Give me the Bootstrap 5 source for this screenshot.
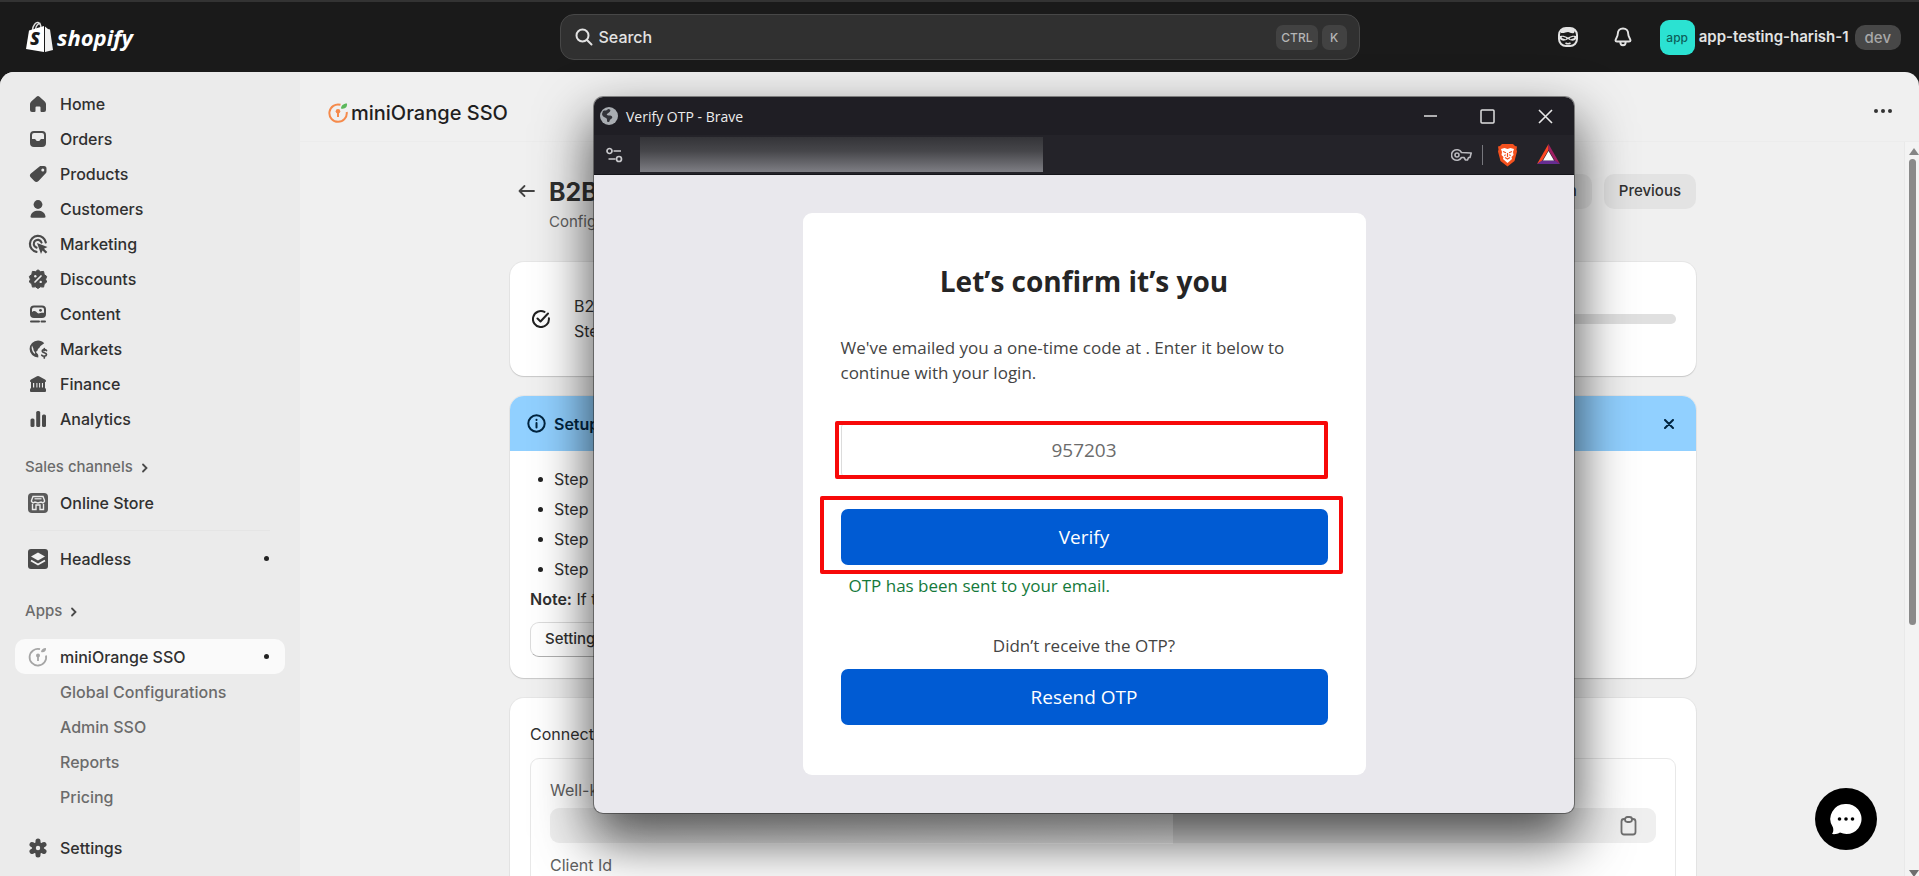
<!DOCTYPE html>
<html lang="en">
<head>
<meta charset="utf-8">
<meta name="viewport" content="width=device-width, initial-scale=1">
<title>miniOrange SSO</title>
<link href="https://cdn.jsdelivr.net/npm/bootstrap@5.3.0/dist/css/bootstrap.min.css" rel="stylesheet">
<script src="https://cdn.jsdelivr.net/npm/bootstrap@5.3.0/dist/js/bootstrap.bundle.min.js"></script>
<style>
:root{--ink:#303030;--soft:#616161;--ui:"Inter","Liberation Sans",sans-serif;--win:"Open Sans","Noto Sans",sans-serif}
body{font-family:var(--ui);font-size:16px;color:var(--ink);background:#1a1a1a}
svg{display:block;flex:none}
.shell{height:100vh;overflow:hidden}
.topbar{height:72px;border-top:2px solid #333;background:#1a1a1a;color:#e3e3e3;padding:0 18px}
.side-slot{flex:1 1 0}
.wordmark{font:italic 700 22px/30px var(--win);color:#fff;text-decoration:none}
.searchbox{width:800px;height:46px;border:1px solid #474747;border-radius:14px;background:#303030;padding:0 12px 0 14px}
.searchbox input{background:none;border:0;outline:0;color:#e3e3e3;font-weight:500;min-width:0}
.searchbox input::placeholder{color:#e3e3e3;opacity:1}
.searchbox kbd{font:500 12px/25px var(--ui);background:#424242;color:#b5b5b5;border-radius:7px;padding:0 5px;min-width:25px;text-align:center}
.iconbtn{background:none;border:0;padding:0;color:inherit}
.bell{margin:0 28px 0 36px}
.avatar{width:35px;height:35px;border-radius:9px;background:#2be2d2;color:#0b5f5a;font:500 12px/35px var(--ui);text-align:center}
.store{font-weight:600;font-size:15px;margin:0 6px 0 4px}
.devtag{background:#474747;color:#a8a8a8;border-radius:10px;font:500 15px/25px var(--ui);padding:0 10px}
.frame{border-radius:14px 14px 0 0;overflow:hidden;background:#f0f0f0;min-height:0}
.sidebar{width:300px;background:#ebebeb;padding:14px 15px}
.sidebar a{display:flex;align-items:center;gap:12px;height:35px;padding:0 16px 0 13px;border-radius:10px;color:var(--ink);text-decoration:none;font-weight:500}
.sidebar a svg{color:#4a4a4a}
.sidebar a.sub{padding-left:45px;color:#6b6b6b}
.sidebar a.sect{color:#6b6b6b;padding-left:10px;font-size:15px;gap:8px;margin-top:14px}
.sidebar a.sect-apps{margin:18px 0 10px}
.sidebar a.on{background:#fafafa}
.dotmark{width:5px;height:5px;border-radius:50%;background:#222;margin-left:auto}
.rule{height:1px;background:#e5e5e5;margin:10px 15px}
.apphead{height:70px;border-bottom:1px solid #ececec;padding:0 27px 12px 28px}
.apphead h1{font-size:20px;font-weight:500;color:#1f1f1f;margin:0}
.apptitle{gap:3px}
.canvas{padding:32px 208px 0 210px}
.pagehead{padding-left:8px;margin-bottom:28px}
.pagehead h2{font-size:25px;font-weight:700;line-height:36px;margin:0}
.pagehead .subtitle{line-height:24px;color:var(--soft);font-size:15px}
.pagetitle{padding-left:14px}
.softbtn{background:#e3e3e3;border:0;border-radius:10px;height:35px;padding:0 15px;font-weight:500;font-size:15px;color:var(--ink)}
.panel{background:#fff;border-radius:14px;box-shadow:0 1px 1px #c8c8c8,0 0 0 1px #e6e6e6}
.panel + .panel{margin-top:20px}
.status{min-height:114px;padding:0 20px 0 22px;gap:24px}
.status .lines{line-height:25px}
.status .progress{height:10px;background:#e0e0e0}
.banner{background:#91d0ff;height:55px;padding:0 22px 0 17px;border-radius:14px 14px 0 0;color:#00243f;font-weight:600}
.guide{padding:13px 20px 21px}
.steps{list-style:none;margin:0;padding:0 0 0 8px;line-height:30px}
.steps li{display:flex;align-items:center;gap:11px}
.steps li::before{content:"";width:5px;height:5px;border-radius:50%;background:#222}
.noteline{line-height:30px;margin-bottom:8px}
.outbtn{height:35px;border:1px solid #dcdcdc;border-bottom-color:#b0b0b0;border-radius:9px;background:#fff;font-weight:500;font-size:15px;padding:0 14px;color:var(--ink)}
.connect{padding:24px 20px 20px}
.inset-box{border:1px solid #e8e8e8;border-radius:9px;padding:19px;margin-top:12px;height:200px}
.inset-box label{display:block;line-height:24px;color:var(--soft)}
.fieldrow{height:35px;background:#efefef;border-radius:9px;padding:0 19px;margin:6px 0 10px}
.fieldrow input{background:none;border:0;min-width:0}
.rail{width:15px;background:#f3f3f3;border-left:1px solid #e9e9e9;padding:6px 0 0 4px}
.thumb{width:7px;height:466px;border-radius:4px;background:#8a8a8a;margin-top:3px}
.workarea{min-height:0}
.window{position:absolute;left:594px;top:97px;width:980px;border-radius:9px;background:#e9e8ed;box-shadow:0 0 0 1px rgba(40,40,40,.5),0 25px 54px 3px rgba(0,0,0,.68);font-family:var(--win)}
.titlebar{height:38px;background:#1f1e24;color:#ededed;border-radius:9px 9px 0 0;font-size:14px;padding:0 21px 0 6px}
.tb-min{margin-right:42px}
.tb-max{margin-right:43px}
.urlbar{height:40px;background:#242329;border-bottom:1px solid #15151a;padding:0 14px 0 12px}
.masked{width:403px;height:35px;background:linear-gradient(#343438,#46464a 40%,#7e7e84);margin-left:17px}
.divider{width:1px;height:20px;background:#77777d;margin:0 14px 0 10px}
.tri{margin-left:19px}
.otp{width:563px;margin:38px auto;background:#fff;border-radius:9px;padding:48px 38px 50px}
.otp h2{font-size:28px;font-weight:700;line-height:40px;margin:0 0 34px;color:#252525;text-align:center}
.otp p{font-size:17px;line-height:25px;margin:0 0 38px;color:#444}
.otp input{width:100%;height:54px;border:1px solid #dcdcdc;border-radius:4px;text-align:center;font-size:19px;color:#6b6b6b}
.bluebtn{height:56px;width:100%;border:0;border-radius:7px;background:#005bd3;color:#fff;font-size:19px}
.verify-row{margin-top:32px}
.callout{position:absolute;border:4px solid #f70909;border-radius:2px;pointer-events:none}
.c-code{inset:-2px 0 -2px -6px}
.c-verify{inset:-13px -15px -9px -21px}
.otp .sent{color:#14793a;font-weight:500;line-height:24px;margin:9px 8px 36px}
.otp .ask{line-height:24px;text-align:center;margin:0 0 11px}
.smudge{position:absolute;left:-29px;bottom:-31px;width:608px;height:30px;background:linear-gradient(90deg,rgba(255,255,255,0),rgba(255,255,255,.12))}
.chat{position:absolute;right:42px;bottom:26px;width:62px;height:62px;border-radius:50%;background:#000;border:0;padding:0}
</style>
</head>
<body>
<div class="shell d-flex flex-column position-relative">
  <header class="topbar d-flex align-items-center flex-shrink-0">
    <div class="side-slot d-flex align-items-center gap-1">
      <svg class="ms-2" width="27" height="32" viewBox="0 0 27 32"><path d="M6.500 9C7 4 10 1 12 1.500c2 .5 3 3 3 6M9.500 8c.5-3.500 3-6 5-5.500" fill="none" stroke="#ddd" stroke-width="1.400"/><path d="M3 9.500 18 5v26L0 28z" fill="#fff"/><path d="M19 5.500l3 2.500 2 .5L27 29l-8 2z" fill="#f1f1f1"/><text x="4" y="24" font-family="Open Sans" font-weight="800" font-style="italic" font-size="18" fill="#1a1a1a">S</text></svg>
      <a class="wordmark" href="#">shopify</a>
    </div>
    <div class="searchbox d-flex align-items-center gap-1">
      <svg width="18" height="18" viewBox="0 0 18 18" fill="none" stroke="#e3e3e3" stroke-width="2" stroke-linecap="round"><circle cx="7.500" cy="7.500" r="6"/><path d="M12 12l4.500 4.500"/></svg>
      <input class="flex-grow-1" type="text" placeholder="Search" aria-label="Search">
      <kbd>CTRL</kbd><kbd>K</kbd>
    </div>
    <div class="side-slot d-flex align-items-center justify-content-end">
      <button class="iconbtn" aria-label="Assistant"><svg width="20" height="20" viewBox="0 0 20 20"><rect x="1" y="1" width="18" height="18" rx="7" fill="none" stroke="#e3e3e3" stroke-width="2"/><path d="M3 3.500C6 .5 14 .5 17 3.500L16 6c-3 1-4-1-6-1S6 6.500 3 6z" fill="#e3e3e3"/><path d="M2 9c3-.5 5 0 8 1.500C13 9 15 8.500 18 9v3c-2 2.500-5 2-8 0-3 2-6 2.500-8 0z" fill="#e3e3e3"/><path d="M4.500 10.500l3 1M15.500 10.500l-3 1" stroke="#1a1a1a" stroke-width="1.600" stroke-linecap="round"/><path d="M7.500 16q2.500 1.500 5 0" stroke="#e3e3e3" stroke-width="1.500" fill="none"/></svg></button>
      <button class="iconbtn bell" aria-label="Notifications"><svg width="18" height="20" viewBox="0 0 18 20" fill="none" stroke="#e3e3e3" stroke-width="1.900" stroke-linejoin="round"><path d="M9 1.500c-3.200 0-5.200 2.300-5.200 5.200C3.800 10 1.500 11.500 1.500 13.500c0 .9.700 1 1.500 1h12c.8 0 1.500-.1 1.500-1 0-2-2.300-3.500-2.300-6.800C14.200 3.800 12.200 1.500 9 1.500zM6.300 15a2.700 3.300 0 0 0 5.400 0"/></svg></button>
      <div class="avatar">app</div><span class="store">app-testing-harish-1</span><span class="devtag">dev</span>
    </div>
  </header>

  <div class="frame d-flex flex-grow-1">
    <nav class="sidebar flex-shrink-0" aria-label="Main">
      <a href="#"><svg width="20" height="20" viewBox="0 0 20 20"><path fill="currentColor" d="M8.500 2.700a2.200 2.200 0 0 1 3 0l5 4.500c.9.800 1.500 1.900 1.500 3V16a2 2 0 0 1-2 2h-2.500a1 1 0 0 1-1-1v-3.500a1 1 0 0 0-1-1h-3a1 1 0 0 0-1 1V17a1 1 0 0 1-1 1H4a2 2 0 0 1-2-2v-5.800c0-1.100.600-2.200 1.500-3z"/></svg>Home</a>
      <a href="#"><svg width="20" height="20" viewBox="0 0 20 20"><path fill="currentColor" fill-rule="evenodd" d="M6 2h8a4 4 0 0 1 4 4v8a4 4 0 0 1-4 4H6a4 4 0 0 1-4-4V6a4 4 0 0 1 4-4zm0 2a2 2 0 0 0-2 2v4h2.500c.8 0 1 .4 1.300.9.500.8.900 1.100 2.200 1.100s1.700-.3 2.200-1.100c.3-.5.500-.9 1.300-.9H16V6a2 2 0 0 0-2-2z"/></svg>Orders</a>
      <a href="#"><svg width="20" height="20" viewBox="0 0 20 20"><path fill="currentColor" fill-rule="evenodd" d="M11.500 2.500c.5-.5 1-.500 1.500-.500h3a2.500 2.500 0 0 1 2.500 2.500v3c0 .7-.2 1.300-.7 1.800l-7.300 7.700a3 3 0 0 1-4.200 0L2.900 13.600a2.800 2.800 0 0 1 0-4zM14.800 4.500a1.500 1.500 0 1 0 0 3 1.500 1.500 0 0 0 0-3z"/></svg>Products</a>
      <a href="#"><svg width="20" height="20" viewBox="0 0 20 20" fill="currentColor"><circle cx="10" cy="5.500" r="4.400"/><path d="M2.500 17.500C3 13.500 6 11.700 10 11.700s7 1.800 7.500 5.800c0 .8-.4 1.200-1.200 1.200H3.700c-.8 0-1.200-.4-1.200-1.200z"/></svg>Customers</a>
      <a href="#"><svg width="20" height="20" viewBox="0 0 20 20"><path d="M17.800 8.500A8 8 0 1 0 8.500 17.800M13.500 8.500A4 4 0 1 0 8.500 13.600" fill="none" stroke="currentColor" stroke-width="2.200" stroke-linecap="round"/><path fill="currentColor" d="M9 9l10.500 4-3.500 1.800 3.300 3.300-1.600 1.500-3.200-3.200L13 20z"/></svg>Marketing</a>
      <a href="#"><svg width="20" height="20" viewBox="0 0 20 20"><path d="M10 .8l2.500 1.900 3.100-.3.600 3.100 2.500 1.900-1.100 2.900 1.100 2.700-2.500 2-.6 3.100-3.200-.3L10 19.500l-2.500-1.700-3.100.3-.6-3.100-2.500-2 1.100-2.700-1.100-2.900 2.500-1.900.6-3.100 3.100.3z" fill="currentColor" stroke="currentColor" stroke-linejoin="round"/><path d="M13 7l-6 6" stroke="#ebebeb" stroke-width="1.700" stroke-linecap="round"/><circle cx="7.300" cy="7.300" r="1.200" fill="#ebebeb"/><circle cx="12.700" cy="12.900" r="1.200" fill="#ebebeb"/></svg>Discounts</a>
      <a href="#"><svg width="20" height="20" viewBox="0 0 20 20"><rect x="3" y="2.500" width="14" height="10.500" rx="3" fill="none" stroke="currentColor" stroke-width="2"/><path d="M3 9c3-3 4.500-2 6.500 0 1.500 1.300 3.500-1 7.500 0v4H4z" fill="currentColor"/><circle cx="12.500" cy="6.300" r="1.400" fill="currentColor"/><path d="M3 17.500h8M13.500 17.500H17" stroke="currentColor" stroke-width="2" stroke-linecap="round"/></svg>Content</a>
      <a href="#"><svg width="20" height="20" viewBox="0 0 20 20"><path fill="currentColor" fill-rule="evenodd" d="M10 1.500c2.500 0 4.700 1 6.200 2.700L12.500 7c-1 .8-.5 2-2 2.500-1 .3-.5 2-1.500 2.500s-1.500 1 0 2.200c1.500 1 1.500 3 1.200 4.300A8.500 8.500 0 0 1 10 1.500zM4 6.500c-1 3 .5 7 3 8.500 1-2-2-3-1.500-5z"/><path d="M18.500 11.500c-1-1.200-4.300-1.200-4.300.6 0 2 4.300 1.300 4.300 3.500 0 2-3.500 2.200-4.700.6M16.300 9.500v2M16.300 17v2" fill="none" stroke="currentColor" stroke-width="1.700" stroke-linecap="round"/></svg>Markets</a>
      <a href="#"><svg width="20" height="20" viewBox="0 0 20 20"><path fill="currentColor" fill-rule="evenodd" d="M9 2.200a2 2 0 0 1 2 0l6 3.300c.7.400 1 .9 1 1.500S17.500 8 17 8v6c.6.300 1 1 1 1.800V17a1 1 0 0 1-1 1H3a1 1 0 0 1-1-1v-1.200c0-.8.4-1.500 1-1.800V8c-.5 0-1-.4-1-1s.3-1.100 1-1.500zM5 9v4.500h1.200V9zm3.400 0v4.500h1V9zm2.700 0v4.500h1V9zm2.800 0v4.500H15V9z"/></svg>Finance</a>
      <a href="#"><svg width="20" height="20" viewBox="0 0 20 20" fill="currentColor"><rect x="2.500" y="9.500" width="4" height="8.500" rx="1.500"/><rect x="8.200" y="2" width="4" height="16" rx="1.500"/><rect x="14" y="5.500" width="4" height="12.500" rx="1.500"/></svg>Analytics</a>
      <a href="#" class="sect">Sales channels<svg width="8" height="10" viewBox="0 0 8 10" fill="none" stroke="currentColor" stroke-width="1.800" stroke-linecap="round"><path d="M2 1.500l3.500 3.500L2 8.500"/></svg></a>
      <a href="#"><svg width="20" height="20" viewBox="0 0 20 20"><rect width="20" height="20" rx="4" fill="#5a5a5a"/><path d="M3.500 7.500L5 3.500h10l1.500 4v1l-1.500 1.500-2-1-3 1-3-1-2 1-1.500-1.500zM4.500 11v5.500H8V12h4v4.500h3.500V11" fill="none" stroke="#ebebeb" stroke-width="1.400"/><path d="M6.500 5.800h7" stroke="#ebebeb" stroke-width="1.200"/></svg>Online Store</a>
      <div class="rule"></div>
      <a href="#"><svg width="20" height="20" viewBox="0 0 20 20"><rect width="20" height="20" rx="3" fill="#4a4a4a"/><path d="M10 3.500L17 7.500 10 11.500 3 7.500z" fill="#f1f1f1"/><path d="M3 11.500l7 4 7-4" fill="none" stroke="#f1f1f1" stroke-width="1.800"/></svg>Headless<span class="dotmark"></span></a>
      <a href="#" class="sect sect-apps">Apps<svg width="8" height="10" viewBox="0 0 8 10" fill="none" stroke="currentColor" stroke-width="1.800" stroke-linecap="round"><path d="M2 1.500l3.500 3.500L2 8.500"/></svg></a>
      <a href="#" class="on"><svg width="20" height="20" viewBox="0 0 20 20"><path d="M12 2.200A8.300 8.300 0 1 0 18 8.500" fill="none" stroke="#a5a5a5" stroke-width="1.800"/><path d="M13 5c0-2 2-4 5-4 .5 3-2 5-5 4z" fill="#a5a5a5"/><circle cx="10" cy="8.500" r="2" fill="#a5a5a5"/><path d="M10 8v6" stroke="#a5a5a5" stroke-width="1.800"/></svg>miniOrange SSO<span class="dotmark"></span></a>
      <a href="#" class="sub">Global Configurations</a>
      <a href="#" class="sub">Admin SSO</a>
      <a href="#" class="sub">Reports</a>
      <a href="#" class="sub">Pricing</a>
      <a href="#" class="mt-3"><svg width="20" height="20" viewBox="0 0 20 20"><path d="M10 3v14M4 6.500l12 7M4 13.500l12-7" stroke="currentColor" stroke-width="5" stroke-linecap="round"/><circle cx="10" cy="10" r="6" fill="currentColor"/><circle cx="10" cy="10" r="2.200" fill="#ebebeb"/></svg>Settings</a>
    </nav>

    <div class="flex-grow-1 d-flex flex-column">
      <div class="apphead d-flex align-items-end justify-content-between flex-shrink-0">
        <div class="apptitle d-flex align-items-center pb-1">
          <svg width="20" height="20" viewBox="0 0 20 20"><path d="M12.500 1.800A8.700 8.700 0 1 0 18.700 9" fill="none" stroke="#f58a4b" stroke-width="2"/><path d="M13 5.500c0-2.500 2-5 6-5 .5 3.500-2 6-6 5z" fill="#5cb85c"/><circle cx="10" cy="8.300" r="2.300" fill="#f58a4b"/><path d="M10 8v6" stroke="#f58a4b" stroke-width="2"/></svg>
          <h1>miniOrange SSO</h1>
        </div>
        <button class="iconbtn pb-3" aria-label="More actions"><svg width="18" height="4" viewBox="0 0 18 4" fill="#333"><circle cx="2" cy="2" r="2"/><circle cx="9" cy="2" r="2"/><circle cx="16" cy="2" r="2"/></svg></button>
      </div>
      <div class="workarea d-flex flex-grow-1">
        <main class="canvas flex-grow-1">
          <div class="pagehead d-flex align-items-start">
            <a href="#" class="text-dark pt-2" aria-label="Back"><svg width="17" height="18" viewBox="0 0 17 18" fill="none" stroke="#444" stroke-width="1.800" stroke-linecap="round" stroke-linejoin="round"><path d="M16 9H1.500M6.500 4l-5 5 5 5"/></svg></a>
            <div class="pagetitle flex-grow-1">
              <h2>B2B</h2>
              <div class="subtitle">Config</div>
            </div>
            <button class="softbtn me-2 ps-5">n</button>
            <button class="softbtn ms-1">Previous</button>
          </div>

          <section class="panel status d-flex align-items-center">
            <svg width="18" height="18" viewBox="0 0 18 18" fill="none" stroke="#222" stroke-width="2" stroke-linecap="round" stroke-linejoin="round"><path d="M12.500 1.900A8 8 0 1 0 16.900 8.200M5.500 8.500l3 3 7.500-8"/></svg>
            <div class="lines">B2<br>Ste</div>
            <div class="progress flex-grow-1 ms-5" role="progressbar" aria-label="Setup progress" aria-valuenow="0" aria-valuemin="0" aria-valuemax="100"><div class="progress-bar" style="width:0%"></div></div>
          </section>

          <section class="panel">
            <div class="banner d-flex align-items-center gap-2">
              <svg width="19" height="19" viewBox="0 0 19 19" fill="none" stroke="#00243f" stroke-width="2" stroke-linecap="round"><circle cx="9.500" cy="9.500" r="8.200"/><path d="M9.500 9v4.500M9.500 5.700v.2"/></svg>
              <span class="flex-grow-1">Setup</span>
              <button class="iconbtn" aria-label="Dismiss"><svg width="10" height="10" viewBox="0 0 10 10" stroke="#00243f" stroke-width="2" stroke-linecap="round"><path d="M1 1l8 8M9 1l-8 8"/></svg></button>
            </div>
            <div class="guide">
              <ul class="steps"><li>Step</li><li>Step</li><li>Step</li><li>Step</li></ul>
              <div class="noteline"><strong class="fw-semibold">Note:</strong> If t</div>
              <button class="outbtn d-block">Setting</button>
            </div>
          </section>

          <section class="panel connect">
            <div>Connect</div>
            <div class="inset-box">
              <label for="wellknown">Well-k</label>
              <div class="fieldrow d-flex align-items-center">
                <input id="wellknown" class="flex-grow-1" type="text" readonly>
                <button class="iconbtn" aria-label="Copy"><svg width="17" height="20" viewBox="0 0 17 20" fill="none" stroke="#6e6e6e" stroke-width="1.800"><rect x="1.500" y="3" width="14" height="15.500" rx="2.500"/><rect x="5" y="1" width="7" height="5" rx="2.400" fill="#efefef"/></svg></button>
              </div>
              <label>Client Id</label>
            </div>
          </section>
        </main>
        <div class="rail flex-shrink-0 d-flex flex-column" aria-hidden="true">
          <svg width="10" height="8" viewBox="0 0 10 8"><path d="M5 0l5 7H0z" fill="#858585"/></svg>
          <div class="thumb"></div>
          <svg class="mt-auto" width="10" height="6" viewBox="0 0 10 6"><path d="M0 0h10L5 7z" fill="#6e6e6e"/></svg>
        </div>
      </div>
    </div>
  </div>

  <section class="window" aria-label="Verify OTP">
    <div class="titlebar d-flex align-items-center">
      <svg width="18" height="18" viewBox="0 0 18 18"><circle cx="9" cy="9" r="9" fill="#a9adb2"/><path d="M3 4c2-1 4 0 5-2 2 0 3 1 2 2.500S6 7 7 8s4-.5 5 1.500-1 2-2 3.500 0 2-2 2 0-3-2-4-4-2-4-4z" fill="#33343a"/></svg>
      <span class="ms-2 flex-grow-1">Verify OTP - Brave</span>
      <button class="iconbtn tb-min" aria-label="Minimize"><svg width="14" height="14" viewBox="0 0 14 14"><path d="M0 7h13" stroke="#e0e0e0" stroke-width="1.500"/></svg></button>
      <button class="iconbtn tb-max" aria-label="Maximize"><svg width="15" height="15" viewBox="0 0 15 15"><rect x="1" y="1" width="13" height="13" rx="1" fill="none" stroke="#e0e0e0" stroke-width="1.500"/></svg></button>
      <button class="iconbtn" aria-label="Close"><svg width="15" height="15" viewBox="0 0 15 15"><path d="M1 1l13 13M14 1l-13 13" stroke="#e8e8e8" stroke-width="1.600"/></svg></button>
    </div>
    <div class="urlbar d-flex align-items-center">
      <svg width="17" height="16" viewBox="0 0 17 16" fill="none" stroke="#c9c9cc" stroke-width="1.700"><circle cx="3.500" cy="4" r="2.500"/><path d="M7.500 4H15M2.500 12h7"/><circle cx="13" cy="12" r="2.500"/></svg>
      <div class="masked me-auto"></div>
      <svg width="21" height="14" viewBox="0 0 21 14" fill="none" stroke="#b9b9be" stroke-width="1.600" stroke-linejoin="round"><path d="M10.500 4.500A5.300 5.300 0 1 0 10.500 9.500H13l1.500 2.500h2l1-2.500h1.500l1.200-4.500z"/><circle cx="6" cy="7" r="2"/></svg>
      <span class="divider"></span>
      <svg width="21" height="24" viewBox="0 0 21 24"><path d="M5 1h11l2 2 2 .5-.5 3 .5 2-2.500 9.500L10.500 23.500 3.500 18 1 8.500l.5-2-.5-3L3 3z" fill="#f4511e"/><path d="M4 6l3.500-1 3 1 3-1L17 6l-1 3 .5 3-2 2 .5 2-4.500 4L6 16l.5-2-2-2L5 9z" fill="#fff"/><path d="M6 8.500l3 1.200M15 8.500l-3 1.200M10.500 10v4M8 14.500l2.500 1.500 2.500-1.500M8.500 11.500l-1 1.500M12.500 11.500l1 1.500" stroke="#f4511e" stroke-width="1.200" fill="none"/></svg>
      <svg class="tri" width="23" height="21" viewBox="0 0 23 21"><path d="M11.500 0L0 20l5-3 6.500-11z" fill="#ff4724"/><path d="M11.500 0L23 20l-5-3-6.500-11z" fill="#9e1f63"/><path d="M0 20h23l-5-3.500H5z" fill="#662d91"/><path d="M11.500 7L6 16.500h11z" fill="#fff"/></svg>
    </div>
    <form class="otp">
      <h2>Let’s confirm it’s you</h2>
      <p>We've emailed you a one-time code at . Enter it below to continue with your login.</p>
      <div class="position-relative"><input class="d-block" type="text" value="957203" aria-label="One-time code"><span class="callout c-code"></span></div>
      <div class="verify-row position-relative"><button type="button" class="bluebtn d-block">Verify</button><span class="callout c-verify"></span></div>
      <p class="sent">OTP has been sent to your email.</p>
      <p class="ask">Didn’t receive the OTP?</p>
      <button type="button" class="bluebtn d-block">Resend OTP</button>
    </form>
    <div class="smudge"></div>
  </section>

  <button class="chat d-flex align-items-center justify-content-center" aria-label="Open chat"><svg width="32" height="32" viewBox="0 0 32 32"><path d="M16 1a15 15 0 1 1-6 28.500c-2 1.200-5 2-8 1.500 1.500-2 1.500-4 1-6.500A15 15 0 0 1 16 1z" fill="#fff"/><circle cx="9.500" cy="16" r="1.800"/><circle cx="16" cy="16" r="1.800"/><circle cx="22.500" cy="16" r="1.800"/></svg></button>
</div>
</body>
</html>
